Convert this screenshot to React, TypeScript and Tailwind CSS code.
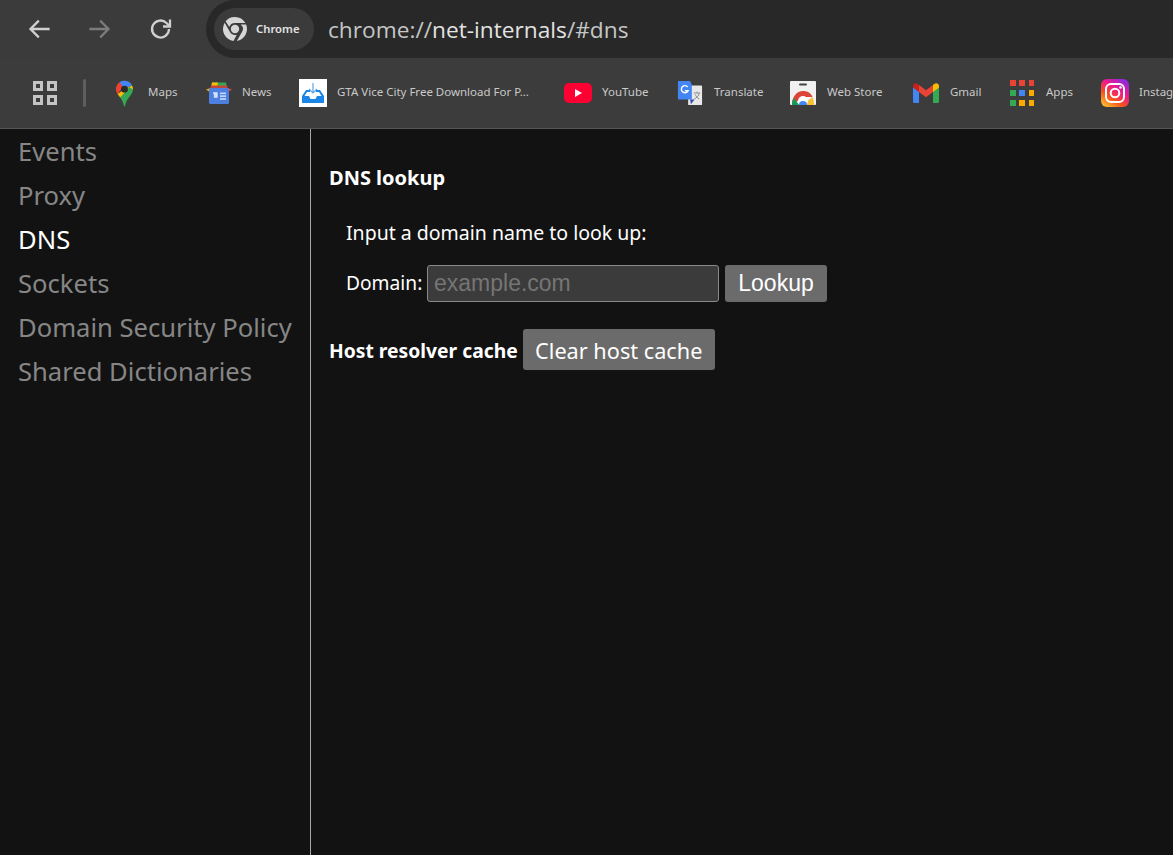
import { ReactNode } from 'react';

const uiFont = "font-['Noto_Sans','Open_Sans',sans-serif]";

function MapsIcon() {
  return (
    <svg viewBox="0 0 20 28" className="w-[19px] h-[28px]">
      <path d="M10 1C5 1 1 5 1 10c0 2 .7 3.600 1.700 5L10 6z" fill="#ea4335" />
      <path d="M10 1c-2 0-3.800.6-5.200 1.700L10 10l8-4c-1.400-3-4.400-5-8-5z" fill="#4285f4" />
      <path d="M19 10c0-1.500-.4-2.800-1-4l-8 4-7.300 5c.8 1.200 1.800 2.400 2.800 3.700L19 10z" fill="#fbbc04" />
      <path d="M19 10c0 6-7 9-8.300 17.300-.1.800-1.300.8-1.400 0C8.700 23.500 7 21 5.500 18.700L15 8z" fill="#34a853" />
      <circle cx="10" cy="10" r="3.600" fill="#2b2b2b" />
    </svg>
  );
}

function NewsIcon() {
  return (
    <svg viewBox="0 0 26 24" className="w-[26px] h-[24px]">
      <path d="M6 1.500h14l1 6H5z" fill="#34a853" />
      <path d="M6 1.500h6l-1 6H5z" fill="#fbbc04" />
      <path d="M0 8.500l6-2v6z" fill="#f9ab00" />
      <path d="M26 8.500l-6-2v6z" fill="#ea4335" />
      <path d="M5 4.500h16l.8 3H4.200z" fill="#c5453a" />
      <rect x="3" y="7" width="20" height="16" rx="1.500" fill="#4c7fe0" />
      <path d="M7 12h4v1.500H8.500v2.500H11v-1.500h-1V13.500" fill="none" stroke="#d7e4fb" strokeWidth="1.300" />
      <rect x="14" y="11.500" width="6" height="1.700" fill="#c3d6f8" />
      <rect x="14" y="14.300" width="6" height="1.700" fill="#c3d6f8" />
      <rect x="14" y="17.100" width="6" height="1.700" fill="#c3d6f8" />
    </svg>
  );
}

function GtaIcon() {
  return (
    <svg viewBox="0 0 28 28" className="w-[28px] h-[28px]">
      <rect width="28" height="28" fill="#ffffff" />
      <path d="M3 17l4-6h4v2H8l-2.500 4H10l1.500 3h5l1.500-3h4.500L20 13h-3v-2h4l4 6v7H3z" fill="#1a86e8" />
      <path d="M14 4v10M10 10l4 4 4-4" fill="none" stroke="#5aa6e8" strokeWidth="1.200" />
    </svg>
  );
}

function YoutubeIcon() {
  return (
    <svg viewBox="0 0 28 20" className="w-[28px] h-[20px]">
      <rect width="28" height="20" rx="5" fill="#ff0033" />
      <path d="M11 6l7 4-7 4z" fill="#ffffff" />
    </svg>
  );
}

function TranslateIcon() {
  return (
    <svg viewBox="0 0 28 28" className="w-[28px] h-[28px]">
      <rect x="12" y="6" width="15" height="21" rx="1" fill="#e8e8e8" />
      <path d="M1 1h13l2 4v16H2a1 1 0 0 1-1-1z" fill="#4285f4" />
      <path d="M14 21h5l-4 5z" fill="#3b4fb5" />
      <path d="M11.500 7.500A3.800 3.800 0 1 0 12 11.500H8.500" fill="none" stroke="#ffffff" strokeWidth="1.500" />
      <path d="M18 14h7M21.500 12.500v1.500M24 14c-.6 3-3 5.500-5.500 6.500M19.500 15.500c.8 2 2.500 4 4.500 5" fill="none" stroke="#8a8a8a" strokeWidth="1" />
    </svg>
  );
}

function WebStoreIcon() {
  return (
    <svg viewBox="0 0 26 24" className="w-[26px] h-[24px]">
      <rect width="26" height="24" rx="1" fill="#f1f1f1" />
      <rect x="9" y="2.500" width="8" height="2" rx="1" fill="#444444" />
      <path d="M2 24a11 13 0 0 1 11-14c4.500 0 8 2 9.500 6H13z" fill="#db4437" />
      <path d="M22.500 16c1 2 1.500 5 1.500 8H13z" fill="#fbc02d" />
      <path d="M2 24c0-3 .7-5 2-7l5 7z" fill="#0f9d58" />
      <circle cx="13" cy="20" r="5" fill="#ffffff" />
      <path d="M9 24a4 4 0 0 1 8 0z" fill="#4285f4" />
    </svg>
  );
}

function GmailIcon() {
  return (
    <svg viewBox="0 0 26 20" className="w-[26px] h-[20px]">
      <path d="M0 3v15.500A1.500 1.500 0 0 0 1.500 20H6V8z" fill="#4285f4" />
      <path d="M26 3v15.500a1.500 1.500 0 0 1-1.500 1.500H20V8z" fill="#34a853" />
      <path d="M20 2v7l6-4.500V3c0-2.500-2.800-3.600-4.500-2.300z" fill="#fbbc04" />
      <path d="M6 2v7L0 4.500V3C0 .5 2.800-.6 4.500.7z" fill="#c5221f" />
      <path d="M6 2l7 5.300L20 2v7l-7 5.300L6 9z" fill="#ea4335" />
    </svg>
  );
}

function AppsIcon() {
  const colors = ['#ea4335', '#ea4335', '#ea4335', '#34a853', '#4285f4', '#f9ab00', '#34a853', '#f9ab00', '#f9ab00'];
  return (
    <div className="grid grid-cols-3 gap-[4px] w-[24px]">
      {colors.map((c, i) => (
        <span key={i} className="block w-[5.500px] h-[6px]" style={{ background: c }} />
      ))}
    </div>
  );
}

function InstagramIcon() {
  return (
    <svg viewBox="0 0 28 28" className="w-[28px] h-[28px]">
      <defs>
        <linearGradient id="ig" x1="0.1" y1="1" x2="0.8" y2="0">
          <stop offset="0" stopColor="#fdc830" />
          <stop offset="0.35" stopColor="#f5501e" />
          <stop offset="0.65" stopColor="#f0188c" />
          <stop offset="1" stopColor="#8a2be2" />
        </linearGradient>
      </defs>
      <rect width="28" height="28" rx="6" fill="url(#ig)" />
      <rect x="5" y="5" width="18" height="18" rx="5" fill="none" stroke="#ffffff" strokeWidth="2" />
      <circle cx="14" cy="14" r="4.300" fill="none" stroke="#ffffff" strokeWidth="2" />
      <circle cx="19.500" cy="8.500" r="1.200" fill="#ffffff" />
    </svg>
  );
}

function ChromeMono() {
  return (
    <svg viewBox="0 0 24 24" className="w-[24px] h-[24px]" fill="#d6d6d6">
      <path d="M12 0a12 12 0 0 1 10.400 6H12a6 6 0 0 0-5.700 4.100L2.600 4.200A12 12 0 0 1 12 0z" />
      <path d="M23.100 7.500a12 12 0 0 1-9.300 16.400l5-8.600a6 6 0 0 0-1.100-7.800z" />
      <path d="M1.700 5.800l5 8.800a6 6 0 0 0 5.600 3.400c.5 0 1-.1 1.500-.2l-3.300 6.100A12 12 0 0 1 1.700 5.800z" />
      <circle cx="12" cy="12" r="4.200" />
    </svg>
  );
}

function Bookmark({ icon, label, iconBox, labelWidth }: { icon: ReactNode; label: string; iconBox: string; labelWidth: string }) {
  return (
    <div className="flex items-center shrink-0">
      <div className={`flex items-center justify-center ${iconBox}`}>{icon}</div>
      <span className={`text-[11.500px] text-[#c9c9c9] whitespace-nowrap pb-[2px] ${labelWidth}`}>{label}</span>
    </div>
  );
}

const sections = ['Events', 'Proxy', 'DNS', 'Sockets', 'Domain Security Policy', 'Shared Dictionaries'];

export default function App() {
  return (
    <div className={`w-[1173px] h-[855px] overflow-hidden flex flex-col bg-[#121212] ${uiFont}`}>
      {/* Toolbar */}
      <div className="h-[58px] shrink-0 bg-[#3b3b3b] flex items-start">
        <div className="w-[206px] h-[58px] shrink-0 flex items-center pl-[27px] gap-[37px]">
          <svg viewBox="0 0 24 24" className="w-[24px] h-[24px]" fill="none" stroke="#d0d0d0" strokeWidth="2.300" strokeLinecap="square">
            <path d="M21.500 12H4M11 4.500L3.500 12l7.500 7.500" />
          </svg>
          <svg viewBox="0 0 24 24" className="w-[24px] h-[24px]" fill="none" stroke="#7c7c7c" strokeWidth="2.300" strokeLinecap="square">
            <path d="M2.500 12H20M13 4.500l7.500 7.500-7.500 7.500" />
          </svg>
          <svg viewBox="0 0 24 24" className="w-[24px] h-[24px]" fill="none" stroke="#d0d0d0" strokeWidth="2.300">
            <path d="M20 12a8.500 8.500 0 1 1-2.500-6L20.500 9" />
            <path d="M21 2.500V9.500h-7" />
          </svg>
        </div>
        <div className="flex-1 h-[58px] bg-[#282828] rounded-l-[29px] flex items-center pl-[8px]">
          <div className="w-[100px] h-[42px] rounded-full bg-[#3b3b3b] flex items-center pl-[9px] gap-[9px]">
            <ChromeMono />
            <span className="text-[11.300px] font-semibold text-[#e3e3e3]">Chrome</span>
          </div>
          <div className="ml-[14px] pt-[2px] text-[22.700px] text-[#c4c7c5] font-['Open_Sans','Noto_Sans',sans-serif]">
            chrome://<span className="text-[#e3e3e3]">net-internals</span>/#dns
          </div>
        </div>
      </div>

      {/* Bookmarks bar */}
      <div className="h-[70px] shrink-0 bg-[#3c3c3c] flex items-center pl-[33px] overflow-hidden">
        <div className="grid grid-cols-2 gap-[4px] w-[24px] shrink-0">
          {[0, 1, 2, 3].map((i) => (
            <span key={i} className="block w-[10px] h-[10px] border-[3px] border-[#c4c4c4]" />
          ))}
        </div>
        <div className="w-[3px] h-[28px] ml-[26px] mr-[26px] bg-[#5e5e5e] rounded-sm shrink-0" />
        <Bookmark icon={<MapsIcon />} label="Maps" iconBox="w-[24px] mr-[12px]" labelWidth="w-[58px]" />
        <Bookmark icon={<NewsIcon />} label="News" iconBox="w-[26px] mr-[10px]" labelWidth="w-[57px]" />
        <Bookmark icon={<GtaIcon />} label="GTA Vice City Free Download For P..." iconBox="w-[28px] mr-[10px]" labelWidth="w-[227px]" />
        <Bookmark icon={<YoutubeIcon />} label="YouTube" iconBox="w-[28px] mr-[10px]" labelWidth="w-[75px]" />
        <Bookmark icon={<TranslateIcon />} label="Translate" iconBox="w-[26px] mr-[11px]" labelWidth="w-[76px]" />
        <Bookmark icon={<WebStoreIcon />} label="Web Store" iconBox="w-[26px] mr-[11px]" labelWidth="w-[86px]" />
        <Bookmark icon={<GmailIcon />} label="Gmail" iconBox="w-[26px] mr-[11px]" labelWidth="w-[60px]" />
        <Bookmark icon={<AppsIcon />} label="Apps" iconBox="w-[24px] mr-[12px]" labelWidth="w-[55px]" />
        <Bookmark icon={<InstagramIcon />} label="Instagram" iconBox="w-[28px] mr-[10px]" labelWidth="w-[60px]" />
      </div>
      <div className="h-px shrink-0 bg-[#555555]" />

      {/* Page */}
      <div className="flex-1 flex min-h-0">
        <nav className="w-[310px] shrink-0 pl-[18px] pt-[1px] flex flex-col">
          {sections.map((s) => (
            <div key={s} className={`h-[44px] leading-[44px] text-[25.600px] whitespace-nowrap ${s === 'DNS' ? 'text-white' : 'text-[#868686]'}`}>
              {s}
            </div>
          ))}
        </nav>
        <div className="w-px shrink-0 bg-[#a8a8a8]" />
        <main className="flex-1 pl-[18px] pt-[35px] text-white">
          <h2 className="text-[20px] font-bold leading-[28px]">DNS lookup</h2>
          <div className="pl-[17px]">
            <p className="mt-[27px] text-[19.500px] leading-[28px]">Input a domain name to look up:</p>
            <div className="mt-[18px] flex items-center h-[37px]">
              <span className="text-[19.200px] w-[81px] shrink-0">Domain:</span>
              <input
                readOnly
                placeholder="example.com"
                className="w-[292px] h-[37px] px-[6px] bg-[#3b3b3b] border border-[#8a8a8a] rounded-[3px] text-[23px] font-['Liberation_Sans',sans-serif] placeholder:text-[#757575] outline-none"
              />
              <button className="ml-[6px] w-[102px] h-[37px] bg-[#6b6b6b] rounded-[3px] text-[23px] text-white font-['Liberation_Sans',sans-serif]">
                Lookup
              </button>
            </div>
          </div>
          <div className="mt-[27px] flex items-center h-[41px]">
            <h3 className="text-[19.300px] font-bold whitespace-nowrap pt-[3px]">Host resolver cache</h3>
            <button className="ml-[5px] w-[192px] h-[41px] pt-[3px] bg-[#6b6b6b] rounded-[3px] text-[21.700px] text-white">
              Clear host cache
            </button>
          </div>
        </main>
      </div>
    </div>
  );
}
